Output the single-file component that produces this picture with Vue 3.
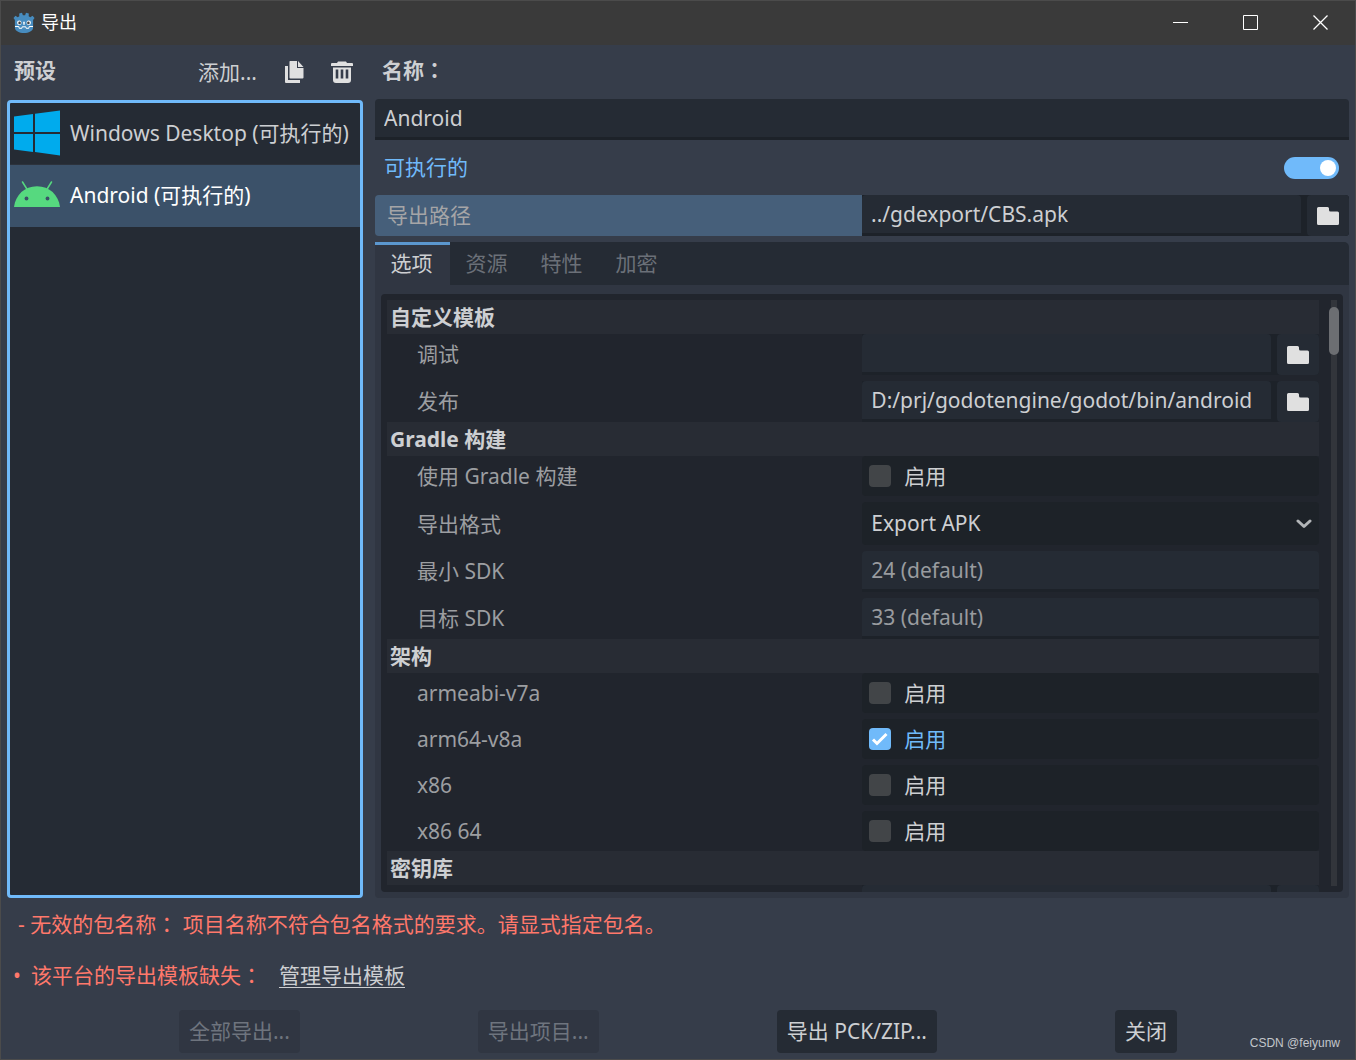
<script setup>
import { ref } from 'vue'

const presets = [
  { id: 'windows', label: 'Windows Desktop (可执行的)' },
  { id: 'android', label: 'Android (可执行的)' },
]
const selected = ref('android')
const name = ref('Android')
const runnable = ref(true)
const exportPath = ref('../gdexport/CBS.apk')

const tabs = ['选项', '资源', '特性', '加密']
const activeTab = ref('选项')

const sections = ref([
  {
    title: '自定义模板',
    rows: [
      { id: 'debug', label: '调试', type: 'file', value: '' },
      { id: 'release', label: '发布', type: 'file', value: 'D:/prj/godotengine/godot/bin/android' },
    ],
  },
  {
    title: 'Gradle 构建',
    rows: [
      { id: 'use-gradle', label: '使用 Gradle 构建', type: 'check', value: false },
      { id: 'format', label: '导出格式', type: 'select', value: 'Export APK' },
      { id: 'min-sdk', label: '最小 SDK', type: 'text', value: '', hint: '24 (default)' },
      { id: 'target-sdk', label: '目标 SDK', type: 'text', value: '', hint: '33 (default)' },
    ],
  },
  {
    title: '架构',
    rows: [
      { id: 'armv7', label: 'armeabi-v7a', type: 'check', value: false },
      { id: 'arm64', label: 'arm64-v8a', type: 'check', value: true },
      { id: 'x86', label: 'x86', type: 'check', value: false },
      { id: 'x86-64', label: 'x86 64', type: 'check', value: false },
    ],
  },
  {
    title: '密钥库',
    rows: [{ id: 'keystore', label: '', type: 'file', value: '' }],
  },
])
</script>

<template>
  <div class="window">
    <header class="titlebar">
      <svg class="app-icon" viewBox="0 0 22 22" aria-hidden="true">
        <path fill="#478cbf" d="M6.200 1.600 9 .8l.9 2.400h2.200L13 .8l2.800.8-.1 2.600 1.600 1 2.200-1.500 2 2.200-1.400 2.200v7.400c0 3.600-4.400 5.500-9.100 5.500s-9.100-1.900-9.100-5.500V8.100L.5 5.900l2-2.200 2.200 1.500 1.600-1z" />
        <path fill="none" stroke="#fff" stroke-width="1" d="M2 14.500h3.800l.4 1.800h2.600l.4-1.500h3.600l.4 1.500h2.600l.4-1.800H20" />
        <circle cx="6.300" cy="10.800" r="2.200" fill="#fff" />
        <circle cx="15.700" cy="10.800" r="2.200" fill="#fff" />
        <circle cx="6.600" cy="10.900" r="1.300" fill="#414042" />
        <circle cx="15.400" cy="10.900" r="1.300" fill="#414042" />
        <path stroke="#fff" stroke-width="1.400" stroke-linecap="round" d="M11 10.200v2" />
      </svg>
      <h1>导出</h1>
      <div class="window-controls">
        <button type="button" aria-label="最小化">
          <svg viewBox="0 0 15 15"><path d="M0 7.500h15" /></svg>
        </button>
        <button type="button" aria-label="最大化">
          <svg viewBox="0 0 15 15"><path d="M.5.5h14v14H.5z" /></svg>
        </button>
        <button type="button" aria-label="关闭窗口">
          <svg viewBox="0 0 15 15"><path stroke-width="1.300" d="M.5.5l14 14M14.500.5l-14 14" /></svg>
        </button>
      </div>
    </header>

    <main class="body">
      <section class="presets">
        <div class="presets-head">
          <h2>预设</h2>
          <button type="button" class="flat">添加...</button>
          <button type="button" class="flat" aria-label="复制">
            <svg width="22" height="22" viewBox="0 0 22 22" fill="#e0e0e0">
              <path d="M2 5h3v14h12v3H3a1 1 0 0 1-1-1z" />
              <path d="M7 0h7v7h6.500v9.500a1 1 0 0 1-1 1H7.500a1 1 0 0 1-1-1V.5z" />
              <path d="M15 0l5.500 6H15z" />
            </svg>
          </button>
          <button type="button" class="flat" aria-label="删除">
            <svg width="22" height="22" viewBox="0 0 22 22">
              <path fill="#e0e0e0" d="M7 .5h8l1 1.500h5a1 1 0 0 1 1 1v2H0V3a1 1 0 0 1 1-1h5zM2 6.500h18v12.500a3 3 0 0 1-3 3H5a3 3 0 0 1-3-3z" />
              <path stroke="#363d4a" stroke-width="2.600" d="M6 8.500v9M11 8.500v9M16 8.500v9" />
            </svg>
          </button>
        </div>
        <ul class="preset-list">
          <li v-for="p in presets" :key="p.id">
            <button type="button" class="preset" :class="{ selected: selected === p.id }" @click="selected = p.id">
              <svg v-if="p.id === 'windows'" width="46" height="46" viewBox="0 0 46 46" fill="#00abed">
                <path d="M0 6.500 19 4v18H0zM21 3.700 46 .5V22H21zM0 24h19v18L0 39.500zM21 24h25v21.500L21 42z" />
              </svg>
              <svg v-else width="46" height="46" viewBox="0 0 46 46">
                <path fill="#56d97f" d="M0 35C1.500 23 10.500 14.300 23 14.300S44.500 23 46 35z" />
                <path stroke="#56d97f" stroke-width="1.500" stroke-linecap="round" d="M8.500 10l5 8M37.500 10l-5 8" />
                <circle cx="12.500" cy="26.500" r="1.900" fill="#3b5169" />
                <circle cx="33.500" cy="26.500" r="1.900" fill="#3b5169" />
              </svg>
              <span>{{ p.label }}</span>
            </button>
          </li>
        </ul>
      </section>

      <section class="settings">
        <label class="name-label" for="preset-name">名称<span class="colon">：</span></label>
        <input id="preset-name" v-model="name" class="field" type="text" />

        <label class="runnable">
          <span>可执行的</span>
          <input v-model="runnable" class="switch" type="checkbox" role="switch" />
        </label>

        <div class="path-row">
          <label for="export-path">导出路径</label>
          <div class="file">
            <input id="export-path" v-model="exportPath" class="field" type="text" />
            <button type="button" class="browse" aria-label="浏览">
              <svg width="22" height="18" viewBox="0 0 22 18">
                <path fill="#e0e0e0" d="M1.500 0h9A1.500 1.500 0 0 1 12 1.500V3a1.500 1.500 0 0 0 1.500 1.500h7A1.500 1.500 0 0 1 22 6v10.500a1.500 1.500 0 0 1-1.500 1.500h-19A1.500 1.500 0 0 1 0 16.500v-15A1.500 1.500 0 0 1 1.500 0z" />
              </svg>
            </button>
          </div>
        </div>

        <div class="tabs" role="tablist">
          <button
            v-for="t in tabs"
            :key="t"
            type="button"
            role="tab"
            :aria-selected="activeTab === t"
            :class="{ active: activeTab === t }"
            @click="activeTab = t"
          >{{ t }}</button>
        </div>

        <div class="tab-panel" role="tabpanel">
          <div class="inspector">
            <div class="properties">
              <section v-for="s in sections" :key="s.title">
                <h3>{{ s.title }}</h3>
                <div class="rows">
                  <div v-for="r in s.rows" :key="r.id" class="row" :class="r.type + '-row'">
                    <label :for="r.id">{{ r.label }}</label>
                    <div v-if="r.type === 'file'" class="file">
                      <input :id="r.id" v-model="r.value" class="field" type="text" />
                      <button type="button" class="browse" aria-label="浏览">
                        <svg width="22" height="18" viewBox="0 0 22 18">
                          <path fill="#e0e0e0" d="M1.500 0h9A1.500 1.500 0 0 1 12 1.500V3a1.500 1.500 0 0 0 1.500 1.500h7A1.500 1.500 0 0 1 22 6v10.500a1.500 1.500 0 0 1-1.500 1.500h-19A1.500 1.500 0 0 1 0 16.500v-15A1.500 1.500 0 0 1 1.500 0z" />
                        </svg>
                      </button>
                    </div>
                    <label v-else-if="r.type === 'check'" class="check">
                      <input :id="r.id" v-model="r.value" type="checkbox" />
                      <svg v-if="r.value" class="tick" viewBox="0 0 22 22"><path d="M4 11.500l4 4 9.500-9.500" /></svg>
                      <span>启用</span>
                    </label>
                    <div v-else-if="r.type === 'select'" class="select">
                      <select :id="r.id" v-model="r.value">
                        <option>Export APK</option>
                      </select>
                      <svg class="chevron" viewBox="0 0 16 10"><path d="M2 2l6 5.500L14 2" /></svg>
                    </div>
                    <input v-else :id="r.id" v-model="r.value" class="field" type="text" :placeholder="r.hint" />
                  </div>
                </div>
              </section>
            </div>
            <div class="scrollbar"><div class="thumb"></div></div>
          </div>
        </div>
      </section>
    </main>

    <footer>
      <p class="error detail">- 无效的包名称<span class="colon">：</span> 项目名称不符合包名格式的要求。请显式指定包名。</p>
      <div class="error missing">
        <span class="bullet">•</span>
        <span>该平台的导出模板缺失<span class="colon">：</span></span>
        <a href="#">管理导出模板</a>
      </div>
      <div class="actions">
        <button type="button" disabled>全部导出...</button>
        <button type="button" disabled>导出项目...</button>
        <button type="button">导出 PCK/ZIP...</button>
        <button type="button">关闭</button>
      </div>
    </footer>
    <span class="watermark">CSDN @feiyunw</span>
  </div>
</template>

<style>
body {
  margin: 0;
  background: #363d4a;
}
</style>

<style scoped>
* {
  box-sizing: border-box;
}

.window {
  position: relative;
  display: flex;
  flex-direction: column;
  height: 100vh;
  border: 1px solid #4b4b4b;
  background: #363d4a;
  color: #cdcfd2;
  font: 21px/28px 'Noto Sans', 'Noto Sans CJK SC', sans-serif;
}

button,
input,
select {
  margin: 0;
  padding: 0;
  border: 0;
  outline: 0;
  background: none;
  color: inherit;
  font: inherit;
}

h1,
h2,
h3,
p,
ul {
  margin: 0;
  padding: 0;
  font-size: inherit;
}

svg {
  display: block;
  flex: none;
}

.colon {
  font-family: 'Noto Sans CJK TC', sans-serif;
  line-height: 20px;
}

/* title bar */
.titlebar {
  display: flex;
  align-items: center;
  flex: none;
  height: 44px;
  padding-left: 12px;
  background: #3a3a3a;
  color: #fff;
}

.app-icon {
  width: 22px;
  height: 22px;
}

.titlebar h1 {
  margin-left: 6px;
  padding-bottom: 2px;
  font-size: 18px;
  font-weight: 400;
}

.window-controls {
  display: flex;
  margin-left: auto;
}

.window-controls button {
  display: grid;
  place-items: center;
  width: 70px;
  height: 44px;
  padding-bottom: 1px;
}

.window-controls svg {
  width: 15px;
  height: 15px;
  fill: none;
  stroke: #fff;
}

/* main area */
.body {
  display: flex;
  flex: 1;
  gap: 12px;
  min-height: 0;
  padding: 6px 6px 0;
}

.presets {
  display: flex;
  flex: none;
  flex-direction: column;
  width: 356px;
}

.presets-head {
  display: flex;
  align-items: center;
  gap: 6px;
  height: 43px;
  margin-bottom: 6px;
  padding-left: 7px;
}

.presets-head h2 {
  flex: 1;
  padding-bottom: 6px;
}

.flat {
  height: 43px;
  padding: 0 10px 1px;
}

.preset-list {
  flex: 1;
  border: 3px solid #70bafa;
  border-radius: 4px;
  background: #252b34;
  list-style: none;
}

.preset {
  display: flex;
  align-items: center;
  gap: 10px;
  width: 100%;
  height: 62px;
  padding: 0 4px 1px;
  border-bottom: 1px solid #2c323c;
  white-space: nowrap;
}

.preset span {
  padding-bottom: 1px;
}

.preset.selected {
  border-bottom-color: #3b5169;
  background: #3b5169;
  color: #fff;
}

.settings {
  display: flex;
  flex: 1;
  flex-direction: column;
  min-width: 0;
}

.name-label {
  height: 48px;
  padding: 5px 7px;
  font-weight: 700;
}

.field {
  display: block;
  width: 100%;
  min-width: 0;
  height: 41px;
  padding: 0 9px;
  border-bottom: 3px solid #1d2229;
  border-radius: 4px 4px 0 0;
  background: #252b34;
}

.field::placeholder {
  color: #999b9f;
  opacity: 1;
}

.runnable {
  display: flex;
  align-items: center;
  justify-content: space-between;
  height: 43px;
  margin: 6px 0;
  padding: 0 10px 0 9px;
  color: #70bafa;
}

.runnable span {
  padding-bottom: 2px;
}

.switch {
  display: flex;
  align-items: center;
  width: 55px;
  height: 22px;
  padding: 0 3px;
  border-radius: 11px;
  background: #484f5b;
  appearance: none;
}

.switch::before {
  width: 16px;
  height: 16px;
  border-radius: 50%;
  background: #fff;
  content: '';
}

.switch:checked {
  justify-content: flex-end;
  background: #70bafa;
}

.path-row {
  display: grid;
  grid-template-columns: 1fr 1fr;
  border-radius: 4px;
  background: linear-gradient(90deg, #465f7a 50%, #1d2229 50%);
}

.path-row label {
  padding: 6px 12px;
  color: #a5a5a7;
}

.file {
  display: flex;
  gap: 6px;
  background: #1d2229;
  border-radius: 0 4px 4px 0;
}

.file .field {
  flex: 1;
}

.browse {
  display: grid;
  flex: none;
  place-items: center;
  width: 42px;
  height: 41px;
  padding-top: 1px;
  border-radius: 4px;
  background: #252b34;
}

/* tabs */
.tabs {
  display: flex;
  flex: none;
  height: 43px;
  margin-top: 6px;
  border-radius: 0 5px 0 0;
  background: #252b34;
}

.tabs button {
  width: 75px;
  padding: 0 2px 4px 0;
  border-top: 3px solid transparent;
  color: #6b7078;
}

.tabs .active {
  border-top-color: #5b97cf;
  background: #303642;
  color: #cdcfd2;
}

.tab-panel {
  display: flex;
  flex: 1;
  min-height: 0;
  padding: 9px 6px 6px;
  border-radius: 0 0 4px 4px;
  background: #303642;
}

.inspector {
  display: flex;
  flex: 1;
  gap: 10px;
  min-width: 0;
  padding: 6px 4px 0 6px;
  border-radius: 4px;
  background: #21252d;
}

.properties {
  flex: 1;
  min-width: 0;
  overflow: hidden;
}

h3 {
  height: 34px;
  padding: 3px;
  background: #282c34;
}

.rows {
  display: flex;
  flex-direction: column;
  gap: 6px;
}

.row {
  display: grid;
  grid-template-columns: 51fr 49fr;
  align-items: center;
}

.row > label:first-child {
  padding-left: 30px;
  color: #9c9ea1;
}

.file-row > label:first-child,
.text-row > label:first-child {
  padding-bottom: 2px;
}

.check {
  position: relative;
  display: flex;
  align-items: center;
  gap: 13px;
  height: 40px;
  padding-left: 7px;
  border-radius: 4px;
  background: #1d2228;
}

.check input {
  width: 22px;
  height: 22px;
  border-radius: 4px;
  background: #424548;
  appearance: none;
}

.check input:checked {
  background: #70bafa;
}

.check input:checked ~ span {
  color: #70bafa;
}

.tick {
  position: absolute;
  left: 7px;
  width: 22px;
  height: 22px;
  fill: none;
  stroke: #fff;
  stroke-width: 3;
  pointer-events: none;
}

.select {
  position: relative;
  display: flex;
  align-items: center;
}

.select select {
  width: 100%;
  height: 43px;
  padding: 0 9px 1px;
  border-radius: 4px;
  background: #1d2228;
  appearance: none;
}

.chevron {
  position: absolute;
  right: 7px;
  width: 16px;
  height: 10px;
  fill: none;
  stroke: #b2b5b8;
  stroke-width: 3;
  stroke-linecap: round;
  stroke-linejoin: round;
  pointer-events: none;
}

.scrollbar {
  width: 10px;
  margin-bottom: 6px;
  padding-top: 7px;
  background: linear-gradient(#32353b, #32353b) center / 6px 100% no-repeat;
}

.thumb {
  height: 48px;
  border-radius: 5px;
  background: #6c6e72;
}

/* messages and actions */
footer {
  flex: none;
  padding: 6px;
}

.error {
  color: #ff786b;
}

.detail {
  padding: 6px 11px 8px;
}

.missing {
  display: flex;
  align-items: center;
  height: 46px;
  margin: 6px 0 12px;
  padding-left: 6px;
}

.missing span {
  padding-bottom: 1px;
}

.bullet {
  width: 18px;
}

.missing a {
  margin-left: 17px;
  border-bottom: 1px solid #cdcfd2;
  color: #cdcfd2;
  line-height: 24px;
  text-decoration: none;
}

.actions {
  display: flex;
  gap: 6px;
  justify-content: space-evenly;
}

.actions button {
  height: 43px;
  padding: 0 10px 1px;
  border-radius: 4px;
  background: #252b34;
}

.actions button:disabled {
  background: #303642;
  color: #6e747e;
}

.watermark {
  position: absolute;
  right: 15px;
  bottom: 8px;
  color: #c3c6ca;
  font: 12px/16px 'Liberation Sans', Arial, sans-serif;
}
</style>
